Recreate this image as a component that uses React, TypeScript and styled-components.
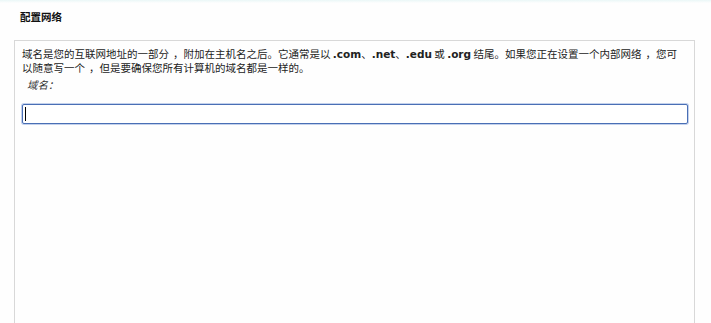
import React from "react";
import styled, { createGlobalStyle } from "styled-components";

const Global = createGlobalStyle`
  html, body { margin: 0; padding: 0; background: #fefefe; }
  body { font-family: "DejaVu Sans", "Noto Sans CJK SC", sans-serif; }
`;

const Page = styled.div`
  width: 711px;
  height: 323px;
  display: flex;
  flex-direction: column;
  overflow: hidden;
  background: #fefefe;
`;

const TopStrip = styled.div`
  height: 3px;
  background: linear-gradient(to bottom, #eaf7f7, #fefefe);
`;

const Title = styled.h1`
  margin: 0;
  padding: 7px 0 0 20px;
  height: 29px;
  box-sizing: border-box;
  font-family: "Noto Sans CJK SC", sans-serif;
  font-size: 10.5px;
  font-weight: 700;
  color: #111;
  line-height: 14px;
`;

const Panel = styled.div`
  margin: 8px 16px 0 14px;
  flex: 1;
  border: 1px solid #d8d8d8;
  border-bottom: none;
  background: #fefefe;
  padding: 6px 6px 0 7px;
  display: flex;
  flex-direction: column;
`;

const Desc = styled.p`
  margin: 0;
  padding-right: 5px;
  font-family: "Noto Sans CJK SC", sans-serif;
  font-size: 10.5px;
  line-height: 14px;
  color: #222;
`;

const Latin = styled.span`
  font-family: "DejaVu Sans", sans-serif;
  font-weight: 700;
  font-size: 10.5px;
  color: #222;
`;

const Comma = styled.span`
  display: inline-block;
  padding-left: 4px;
`;

const Label = styled.div`
  margin: 3px 0 0 5px;
  font-family: "Noto Sans CJK SC", sans-serif;
  font-style: italic;
  font-size: 10.5px;
  line-height: 14px;
  color: #333;
`;

const Field = styled.div`
  position: relative;
  margin-top: 12px;
`;

const Input = styled.input`
  display: block;
  width: 100%;
  height: 20px;
  box-sizing: border-box;
  border: 1px solid #4a6fb5;
  border-radius: 2px;
  box-shadow: 0 0 0 1px #c3d1ec;
  outline: none;
  padding: 0 3px;
  font-family: "DejaVu Sans", sans-serif;
  font-size: 11px;
  background: #fff;
`;

const Caret = styled.span`
  position: absolute;
  left: 3px;
  top: 3px;
  width: 1px;
  height: 14px;
  background: #000;
`;

export default function App() {
  return (
    <Page>
      <Global />
      <TopStrip />
      <Title>配置网络</Title>
      <Panel>
        <Desc>
          域名是您的互联网地址的一部分<Comma>，</Comma>附加在主机名之后。它通常是以 <Latin>.com</Latin>、<Latin>.net</Latin>、<Latin>.edu</Latin> 或 <Latin>.org</Latin> 结尾。如果您正在设置一个内部网络<Comma>，</Comma>您可以随意写一个<Comma>，</Comma>但是要确保您所有计算机的域名都是一样的。
        </Desc>
        <Label>域名：</Label>
        <Field>
          <Input />
          <Caret />
        </Field>
      </Panel>
    </Page>
  );
}
